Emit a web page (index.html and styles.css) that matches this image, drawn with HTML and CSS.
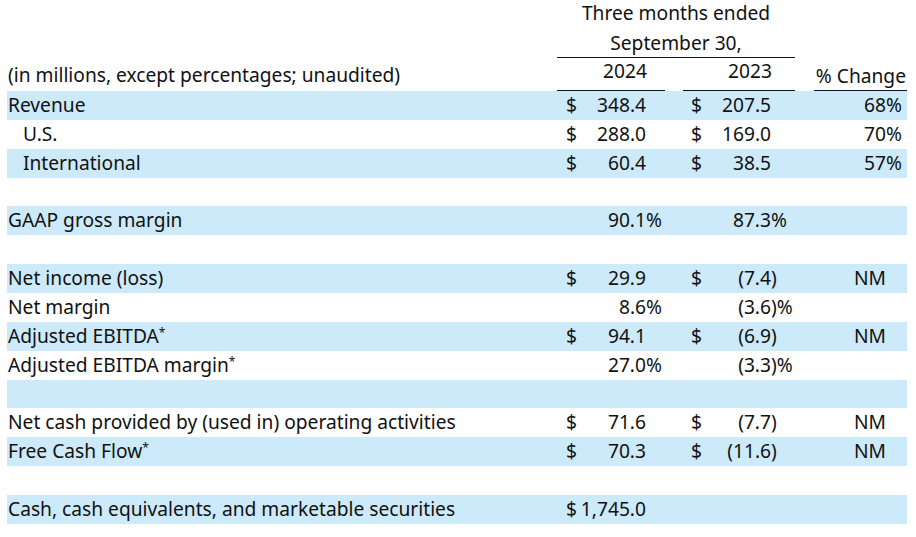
FILE: index.html
```html
<!DOCTYPE html>
<html>
<head>
<meta charset="utf-8">
<link rel="stylesheet" href="styles.css">
</head>
<body>
<div class="table">
  <div class="head">
    <div class="h-period">Three months ended</div>
    <div class="h-period h-date">September 30,</div>
    <div class="h-label">(in millions, except percentages; unaudited)</div>
    <div class="h-year y24">2024</div>
    <div class="h-year y23">2023</div>
    <div class="h-change">% Change</div>
  </div>

  <div class="row blue">
    <div class="label">Revenue</div>
    <div class="num c24"><span class="cur">$</span><span class="v">348.4</span><span class="sfx"></span></div>
    <div class="num c23"><span class="cur">$</span><span class="v">207.5</span><span class="sfx"></span></div>
    <div class="num chg"><span class="v">68</span><span class="sfx">%</span></div>
  </div>
  <div class="row">
    <div class="label indent">U.S.</div>
    <div class="num c24"><span class="cur">$</span><span class="v">288.0</span><span class="sfx"></span></div>
    <div class="num c23"><span class="cur">$</span><span class="v">169.0</span><span class="sfx"></span></div>
    <div class="num chg"><span class="v">70</span><span class="sfx">%</span></div>
  </div>
  <div class="row blue">
    <div class="label indent">International</div>
    <div class="num c24"><span class="cur">$</span><span class="v">60.4</span><span class="sfx"></span></div>
    <div class="num c23"><span class="cur">$</span><span class="v">38.5</span><span class="sfx"></span></div>
    <div class="num chg"><span class="v">57</span><span class="sfx">%</span></div>
  </div>
  <div class="row"></div>
  <div class="row blue">
    <div class="label">GAAP gross margin</div>
    <div class="num c24"><span class="v">90.1</span><span class="sfx">%</span></div>
    <div class="num c23"><span class="v">87.3</span><span class="sfx">%</span></div>
    <div class="num chg"></div>
  </div>
  <div class="row"></div>
  <div class="row blue">
    <div class="label">Net income (loss)</div>
    <div class="num c24"><span class="cur">$</span><span class="v">29.9</span><span class="sfx"></span></div>
    <div class="num c23"><span class="cur">$</span><span class="v">(7.4</span><span class="sfx">)</span></div>
    <div class="num chg"><span class="v">NM</span><span class="sfx"></span></div>
  </div>
  <div class="row">
    <div class="label">Net margin</div>
    <div class="num c24"><span class="v">8.6</span><span class="sfx">%</span></div>
    <div class="num c23"><span class="v">(3.6</span><span class="sfx">)%</span></div>
    <div class="num chg"></div>
  </div>
  <div class="row blue">
    <div class="label">Adjusted EBITDA<span class="ast">*</span></div>
    <div class="num c24"><span class="cur">$</span><span class="v">94.1</span><span class="sfx"></span></div>
    <div class="num c23"><span class="cur">$</span><span class="v">(6.9</span><span class="sfx">)</span></div>
    <div class="num chg"><span class="v">NM</span><span class="sfx"></span></div>
  </div>
  <div class="row">
    <div class="label">Adjusted EBITDA margin<span class="ast">*</span></div>
    <div class="num c24"><span class="v">27.0</span><span class="sfx">%</span></div>
    <div class="num c23"><span class="v">(3.3</span><span class="sfx">)%</span></div>
    <div class="num chg"></div>
  </div>
  <div class="row blue"></div>
  <div class="row">
    <div class="label">Net cash provided by (used in) operating activities</div>
    <div class="num c24"><span class="cur">$</span><span class="v">71.6</span><span class="sfx"></span></div>
    <div class="num c23"><span class="cur">$</span><span class="v">(7.7</span><span class="sfx">)</span></div>
    <div class="num chg"><span class="v">NM</span><span class="sfx"></span></div>
  </div>
  <div class="row blue">
    <div class="label">Free Cash Flow<span class="ast">*</span></div>
    <div class="num c24"><span class="cur">$</span><span class="v">70.3</span><span class="sfx"></span></div>
    <div class="num c23"><span class="cur">$</span><span class="v">(11.6</span><span class="sfx">)</span></div>
    <div class="num chg"><span class="v">NM</span><span class="sfx"></span></div>
  </div>
  <div class="row"></div>
  <div class="row blue">
    <div class="label">Cash, cash equivalents, and marketable securities</div>
    <div class="num c24"><span class="cur">$</span><span class="v">1,745.0</span><span class="sfx"></span></div>
    <div class="num c23"></div>
    <div class="num chg"></div>
  </div>
</div>
</body>
</html>
```

FILE: styles.css
```css
html, body {
  margin: 0;
  padding: 0;
  background: #ffffff;
}

body {
  font-family: "Noto Sans", "Open Sans", sans-serif;
  font-size: 19.2px;
  color: #111111;
}

.table {
  width: 900px;
  margin-left: 7px;
}

.head {
  display: grid;
  grid-template-columns: 550px 108px 18px 112px 19px 93px;
  grid-template-rows: 29px 29px 33px;
}

.h-period {
  grid-column: 2 / 5;
  text-align: center;
  line-height: 26px;
  white-space: nowrap;
}

.h-date {
  grid-row: 2;
  border-bottom: 1px solid #111;
  line-height: 27px;
}

.h-label {
  grid-row: 3;
  grid-column: 1;
  line-height: 26px;
  padding-top: 4px;
  padding-left: 1px;
  white-space: nowrap;
}

.h-year {
  grid-row: 3;
  line-height: 26px;
  border-bottom: 1px solid #111;
  text-align: right;
}

.y24 {
  grid-column: 2;
  padding-right: 18px;
}

.y23 {
  grid-column: 4;
  padding-right: 23px;
}

.h-change {
  grid-row: 3;
  grid-column: 6;
  line-height: 26px;
  padding-top: 5px;
  padding-right: 1px;
  text-align: right;
  border-bottom: 1px solid #111;
  white-space: nowrap;
}

.row {
  display: grid;
  grid-template-columns: 550px 108px 18px 112px 19px 93px;
  height: 28.86px;
  line-height: 28px;
}

.row.blue {
  background: #cdeafb;
}

.label {
  grid-column: 1;
  padding-left: 1px;
  white-space: nowrap;
}

.indent {
  padding-left: 16px;
}

.ast {
  font-size: 12px;
  vertical-align: 6px;
  line-height: 0;
}

.num {
  display: flex;
  justify-content: flex-end;
  white-space: nowrap;
}

.c24 {
  grid-column: 2;
}

.c23 {
  grid-column: 4;
}

.chg {
  grid-column: 6;
}

.cur {
  margin-right: auto;
  padding-left: 9px;
}

.c23 .cur {
  padding-left: 8px;
}

.c24 .sfx {
  width: 19px;
}

.c23 .sfx {
  width: 24px;
}

.chg .sfx {
  width: 21px;
}

.sfx {
  text-align: left;
}
```
